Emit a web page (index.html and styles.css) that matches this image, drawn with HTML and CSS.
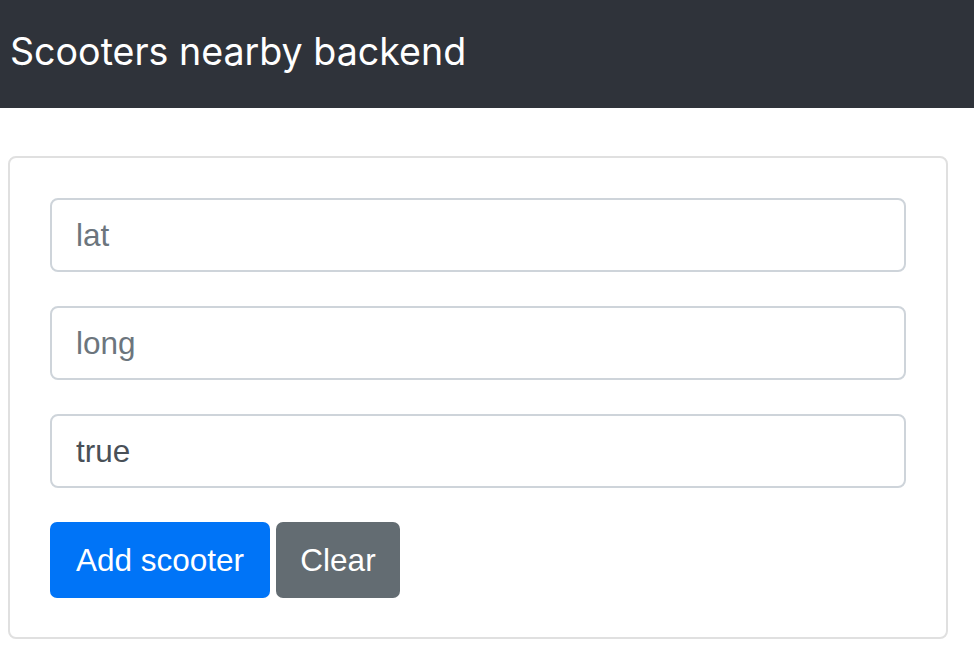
FILE: index.html
```html
<!DOCTYPE html>
<html lang="en">
<head>
<meta charset="utf-8">
<title>Scooters nearby backend</title>
<link rel="stylesheet" href="styles.css">
</head>
<body>
<header class="topbar">
  <h1 class="title">Scooters nearby backend</h1>
</header>
<main class="card">
  <form class="card-body">
    <input class="field" type="text" placeholder="lat">
    <input class="field" type="text" placeholder="long">
    <input class="field" type="text" value="true">
    <div class="actions">
      <button type="button" class="btn btn-primary">Add scooter</button>
      <button type="button" class="btn btn-secondary">Clear</button>
    </div>
  </form>
</main>
</body>
</html>
```
FILE: styles.css
```css
html, body {
  margin: 0;
  padding: 0;
  background: #fff;
}
body {
  font-family: "Liberation Sans", Arial, sans-serif;
}
.topbar {
  background: #2f333a;
  height: 108px;
  display: flex;
  align-items: center;
  padding-left: 10px;
  box-sizing: border-box;
}
.title {
  margin: 0;
  font-family: Inter, "Liberation Sans", sans-serif;
  font-weight: 400;
  font-size: 37.6px;
  color: #fff;
  line-height: 1.2;
  padding-bottom: 4px;
}
.card {
  display: block;
  margin: 48px 0 0 8px;
  width: 940px;
  box-sizing: border-box;
  border: 2px solid #e0e0e0;
  border-radius: 8px;
}
.card-body {
  display: flex;
  flex-direction: column;
  gap: 34px;
  padding: 40px 40px 39px 40px;
  margin: 0;
}
.field {
  display: block;
  width: 100%;
  height: 74px;
  box-sizing: border-box;
  border: 2px solid #ced4da;
  border-radius: 8px;
  padding: 0 24px;
  font-family: "Liberation Sans", Arial, sans-serif;
  font-size: 31.5px;
  color: #495057;
  background: #fff;
  outline: none;
}
.field::placeholder {
  color: #6c757d;
  opacity: 1;
}
.actions {
  display: flex;
  gap: 6px;
}
.btn {
  height: 76px;
  border: none;
  border-radius: 7px;
  padding: 0;
  font-family: "Liberation Sans", Arial, sans-serif;
  font-size: 31.5px;
  color: #fff;
  cursor: pointer;
}
.btn-primary {
  background: #0074f7;
  width: 220px;
}
.btn-secondary {
  background: #636c72;
  width: 124px;
}
```
